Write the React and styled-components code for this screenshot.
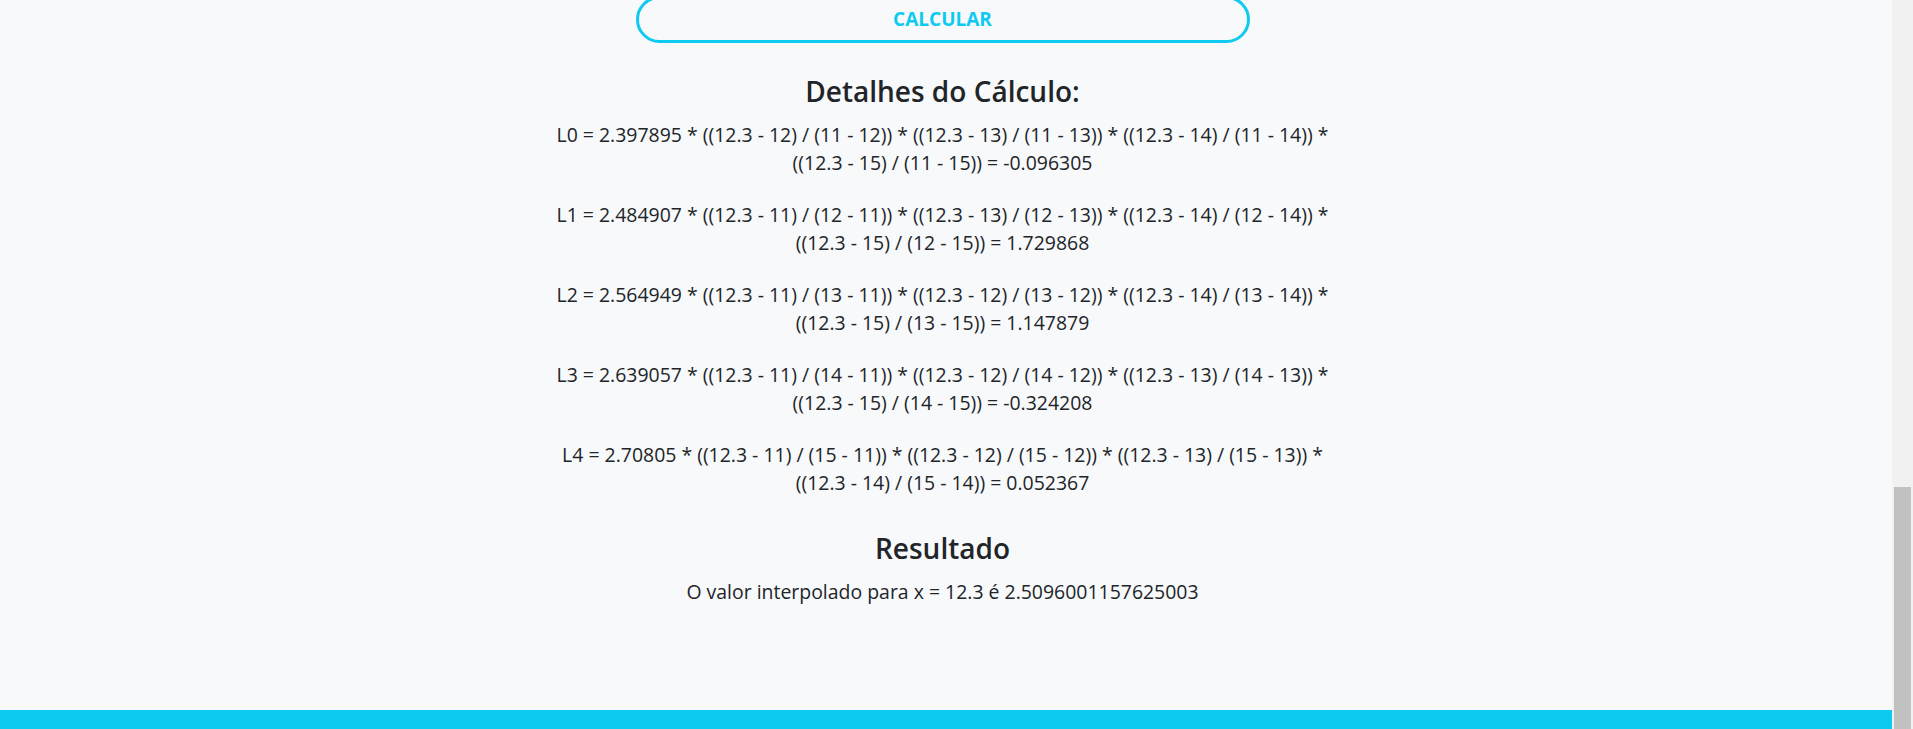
import React from "react";
import styled, { createGlobalStyle } from "styled-components";

const GlobalStyle = createGlobalStyle`
    html, body {
        margin: 0;
        padding: 0;
        height: 100%;
        overflow: hidden;
    }
    body {
        font-family: "Open Sans", "Noto Sans", sans-serif;
        color: #212529;
        background-color: #f8f9fa;
    }
    * {
        box-sizing: border-box;
    }
`;

const steps = [
    {
        label: "L0",
        text: "L0 = 2.397895 * ((12.3 - 12) / (11 - 12)) * ((12.3 - 13) / (11 - 13)) * ((12.3 - 14) / (11 - 14)) * ((12.3 - 15) / (11 - 15)) = -0.096305",
    },
    {
        label: "L1",
        text: "L1 = 2.484907 * ((12.3 - 11) / (12 - 11)) * ((12.3 - 13) / (12 - 13)) * ((12.3 - 14) / (12 - 14)) * ((12.3 - 15) / (12 - 15)) = 1.729868",
    },
    {
        label: "L2",
        text: "L2 = 2.564949 * ((12.3 - 11) / (13 - 11)) * ((12.3 - 12) / (13 - 12)) * ((12.3 - 14) / (13 - 14)) * ((12.3 - 15) / (13 - 15)) = 1.147879",
    },
    {
        label: "L3",
        text: "L3 = 2.639057 * ((12.3 - 11) / (14 - 11)) * ((12.3 - 12) / (14 - 12)) * ((12.3 - 13) / (14 - 13)) * ((12.3 - 15) / (14 - 15)) = -0.324208",
    },
    {
        label: "L4",
        text: "L4 = 2.70805 * ((12.3 - 11) / (15 - 11)) * ((12.3 - 12) / (15 - 12)) * ((12.3 - 13) / (15 - 13)) * ((12.3 - 14) / (15 - 14)) = 0.052367",
    },
];

const App = () => {
    return (
        <>
            <GlobalStyle />
            <Screen>
                <Page>
                    <Main>
                        <CalcButton type="button">CALCULAR</CalcButton>
                        <Details>
                            <Title>Detalhes do Cálculo:</Title>
                            {steps.map((step) => (
                                <Formula key={step.label}>{step.text}</Formula>
                            ))}
                        </Details>
                        <Result>
                            <Title>Resultado</Title>
                            <ResultText>
                                O valor interpolado para x = 12.3 é
                                2.5096001157625003
                            </ResultText>
                        </Result>
                    </Main>
                    <Footer />
                </Page>
                <ScrollTrack>
                    <ScrollThumb />
                </ScrollTrack>
            </Screen>
        </>
    );
};

const Screen = styled.div`
    display: flex;
    height: 100vh;
    overflow: hidden;
`;

const Page = styled.div`
    flex: 1;
    display: flex;
    flex-direction: column;
    background-color: #f8f9fa;
    min-width: 0;
`;

const Main = styled.main`
    flex: 1;
    display: flex;
    flex-direction: column;
    align-items: center;
    margin-top: -4px;
    padding-right: 7px;
`;

const CalcButton = styled.button`
    width: 614px;
    padding: 6px 0;
    border: 3px solid #0dcaf0;
    border-radius: 50px;
    background: transparent;
    color: #0dcaf0;
    font-family: "Open Sans", sans-serif;
    font-weight: 700;
    font-size: 19px;
    line-height: 29px;
    cursor: pointer;

    &:hover {
        background-color: #0dcaf0;
        color: #fff;
    }
`;

const Details = styled.section`
    width: 800px;
    margin-top: 32px;
    text-align: center;
`;

const Title = styled.h3`
    margin: 0 0 12px;
    font-size: 28px;
    font-weight: 600;
    line-height: 1.2;
    text-align: center;
`;

const Formula = styled.p`
    margin: 0 0 22.4px;
    font-size: 19.45px;
    line-height: 28.8px;
`;

const Result = styled.section`
    width: 800px;
    margin-top: 11.5px;
    text-align: center;
`;

const ResultText = styled.p`
    margin: 0;
    font-size: 19.45px;
    line-height: 28.8px;
`;

const Footer = styled.footer`
    height: 19px;
    background-color: #0dcaf0;
`;

const ScrollTrack = styled.div`
    width: 21px;
    display: flex;
    flex-direction: column;
    justify-content: flex-end;
    padding: 0 2px;
    background-color: #f1f1f1;
`;

const ScrollThumb = styled.div`
    height: 242px;
    background-color: #c1c1c1;
`;

export default App;
